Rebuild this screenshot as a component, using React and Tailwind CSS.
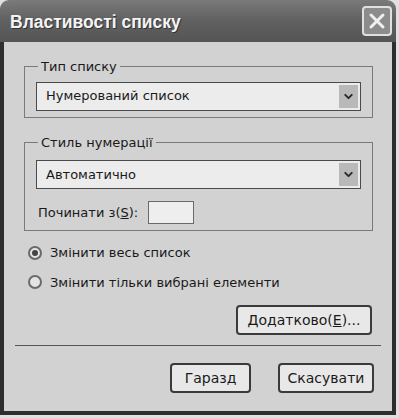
import { ChevronDown, X } from "lucide-react";

function Select({ value }) {
  return (
    <div className="flex h-[29px] w-[325px] items-center border border-[#4a4a4a] bg-[#ececec] pl-[9px]">
      <span className="flex-1 text-[13px] text-[#1a1a1a]">{value}</span>
      <div className="m-[2px] flex h-[23px] w-[19px] items-center justify-center bg-[#b9b9b9]">
        <ChevronDown size={13} strokeWidth={3.5} className="text-[#2a2a2a]" />
      </div>
    </div>
  );
}

function Group({ label, children, className }) {
  return (
    <fieldset
      className={
        "ml-[20px] w-[349px] border border-[#7a7a7a] px-[11px] " + className
      }
    >
      <legend className="ml-[2px] px-[3px] text-[13px] text-[#1a1a1a]">
        {label}
      </legend>
      {children}
    </fieldset>
  );
}

function Radio({ checked, label }) {
  return (
    <label className="flex items-center gap-[8px] text-[13px] text-[#1a1a1a]">
      <span className="flex h-[14px] w-[14px] items-center justify-center rounded-full border-2 border-[#6a6a6a] bg-[#e4e4e4]">
        {checked && <span className="h-[6px] w-[6px] rounded-full bg-[#444]" />}
      </span>
      {label}
    </label>
  );
}

function Button({ children, className }) {
  return (
    <button
      className={
        "h-[30px] rounded-[4px] border-2 border-[#3a3a3a] bg-[#e8e8e8] text-[14px] text-[#1a1a1a] " +
        className
      }
    >
      {children}
    </button>
  );
}

export default function App() {
  return (
    <div
      className="h-[418px] w-[399px] bg-[#e0e0e0]"
      style={{ fontFamily: '"DejaVu Sans", sans-serif' }}
    >
      <div className="flex h-[415px] w-[396px] flex-col overflow-hidden rounded-t-[9px]">
        {/* title bar */}
        <div className="flex h-[42px] items-center justify-between bg-gradient-to-b from-[#7a7a7a] via-[#606060] to-[#555555] pl-[10px] pr-[4px]">
          <span
            className="mt-[2px] text-[17.5px] font-bold text-[#f4f4f4]"
            style={{ fontFamily: '"Liberation Sans", sans-serif', textShadow: "1px 1px 0 #333" }}
          >
            Властивості списку
          </span>
          <div className="flex h-[30px] w-[30px] items-center justify-center rounded-[4px] border-2 border-[#e0e0e0] bg-[#8c8c8c]">
            <X size={24} strokeWidth={3} className="text-[#f0f0f0]" />
          </div>
        </div>

        {/* body */}
        <div className="flex flex-1 flex-col border-x-4 border-b-4 border-[#2e2e2e] bg-[#d2d2d2]">
          <Group label="Тип списку" className="mt-[15px] pb-[6px] pt-[5px]">
            <Select value="Нумерований список" />
          </Group>

          <Group label="Стиль нумерації" className="mt-[15px] pb-[6px] pt-[8px]">
            <Select value="Автоматично" />
            <div className="mt-[12px] flex items-center gap-[10px] pl-[2px]">
              <span className="text-[13px] text-[#1a1a1a]">
                Починати з(<span className="underline">S</span>):
              </span>
              <div className="h-[23px] w-[46px] border border-[#6a6a6a] bg-[#eeeeee]" />
            </div>
          </Group>

          <div className="ml-[24px] mt-[12px] flex flex-col gap-[10px]">
            <Radio checked label="Змінити весь список" />
            <Radio label="Змінити тільки вибрані елементи" />
          </div>

          <div className="mr-[20px] mt-[13px] flex justify-end">
            <Button className="h-[28px] w-[136px]">
              Додатково(<span className="underline">E</span>)...
            </Button>
          </div>

          <div className="mx-[11px] mt-[10px] border-t border-[#555]" />

          <div className="mr-[18px] mt-[17px] flex justify-end gap-[27px]">
            <Button className="w-[81px]">Гаразд</Button>
            <Button className="w-[96px]">Скасувати</Button>
          </div>
        </div>
      </div>
    </div>
  );
}
